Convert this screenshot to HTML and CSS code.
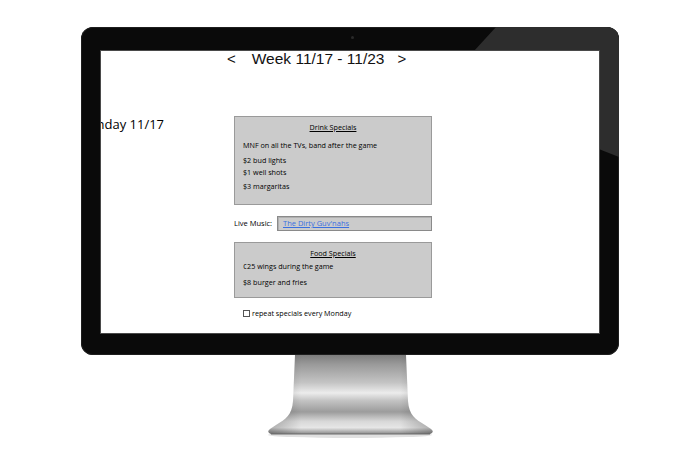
FILE: index.html
```html
<!DOCTYPE html>
<html>
<head>
<meta charset="utf-8">
<link rel="stylesheet" href="styles.css">
</head>
<body>
<div class="page">
  <div class="monitor">
    <div class="glare"></div>
    <div class="cam"></div>
    <div class="screen">
      <div class="week">
        <span class="arrow">&lt;</span>
        <span class="week-title">Week 11/17 - 11/23</span>
        <span class="arrow">&gt;</span>
      </div>
      <div class="body">
        <div class="day">Monday 11/17</div>
        <div class="main">
          <div class="box drink">
            <div class="box-title">Drink Specials</div>
            <div class="line l1">MNF on all the TVs, band after the game</div>
            <div class="line l2">$2 bud lights</div>
            <div class="line l3">$1 well shots</div>
            <div class="line l4">$3 margaritas</div>
          </div>
          <div class="music">
            <span class="music-label">Live Music:</span>
            <span class="music-input"><a class="link">The Dirty Guv'nahs</a></span>
          </div>
          <div class="box food">
            <div class="box-title">Food Specials</div>
            <div class="line f1">¢25 wings during the game</div>
            <div class="line f2">$8 burger and fries</div>
          </div>
          <div class="repeat">
            <span class="check"></span>
            <span class="repeat-text">repeat specials every Monday</span>
          </div>
        </div>
      </div>
    </div>
  </div>
  <svg class="stand" width="170" height="85" viewBox="0 0 170 85">
    <defs>
      <linearGradient id="sv" x1="0" y1="0" x2="0" y2="1">
        <stop offset="0" stop-color="#7d7d7d"/>
        <stop offset="0.12" stop-color="#9a9a9a"/>
        <stop offset="0.35" stop-color="#c4c4c4"/>
        <stop offset="0.48" stop-color="#ececec"/>
        <stop offset="0.58" stop-color="#c2c2c2"/>
        <stop offset="0.72" stop-color="#9c9c9c"/>
        <stop offset="0.84" stop-color="#d8d8d8"/>
        <stop offset="0.92" stop-color="#e6e6e6"/>
        <stop offset="1" stop-color="#8a8a8a"/>
      </linearGradient>
      <linearGradient id="sh" x1="0" y1="0" x2="1" y2="0">
        <stop offset="0" stop-color="#000" stop-opacity="0.25"/>
        <stop offset="0.2" stop-color="#000" stop-opacity="0"/>
        <stop offset="0.8" stop-color="#000" stop-opacity="0"/>
        <stop offset="1" stop-color="#000" stop-opacity="0.25"/>
      </linearGradient>
    </defs>
    <ellipse cx="85" cy="80" rx="82" ry="3" fill="#000" opacity="0.12"/>
    <path d="M30,0 L141,0 L143,46 C144,60 150,64 160,70 L166,74 Q170,77 165,79 L6,79 Q1,77 5,74 L11,70 C21,64 27,60 28,46 Z" fill="url(#sv)"/>
    <path d="M30,0 L141,0 L143,46 C144,60 150,64 160,70 L166,74 Q170,77 165,79 L6,79 Q1,77 5,74 L11,70 C21,64 27,60 28,46 Z" fill="url(#sh)"/>
    <path d="M6,79 L165,79" stroke="#6a6a6a" stroke-width="1"/>
  </svg>
</div>
</body>
</html>
```
FILE: styles.css
```css
html, body {
  margin: 0;
  padding: 0;
  background: #ffffff;
}

.page {
  width: 700px;
  height: 464px;
  padding-top: 27px;
  box-sizing: border-box;
  display: flex;
  flex-direction: column;
  align-items: center;
}

.monitor {
  position: relative;
  width: 538px;
  height: 328px;
  box-sizing: border-box;
  padding: 24px 20px 22px 20px;
  background: #0a0a0a;
  border-radius: 12px;
  box-shadow: inset 0 0 0 1px #1e1e1e;
}

.glare {
  position: absolute;
  left: 0;
  top: 0;
  width: 538px;
  height: 328px;
  border-radius: 12px;
  background: #2d2d2d;
  clip-path: polygon(415px 0, 538px 0, 538px 130px, 360px 60px);
}

.cam {
  position: absolute;
  left: 270px;
  top: 9px;
  width: 3px;
  height: 3px;
  border-radius: 50%;
  background: #2a2a2a;
}

.screen {
  position: relative;
  z-index: 1;
  width: 498px;
  height: 282px;
  background: #ffffff;
  overflow: hidden;
  outline: 1px solid #4a4a4a;
  font-family: "Open Sans", "DejaVu Sans", sans-serif;
  color: #111;
}

.week {
  display: flex;
  align-items: baseline;
  padding-left: 126px;
  margin-top: -1px;
  height: 17px;
  font-family: "Liberation Sans", Arial, sans-serif;
  font-size: 15.5px;
  line-height: 17px;
  color: #111;
}

.week .arrow {
  font-size: 15px;
}

.week-title {
  margin: 0 13px 0 16px;
}

.body {
  display: flex;
  margin-top: 49px;
}

.day {
  width: 157px;
  margin-left: -24px;
  flex-shrink: 0;
  font-size: 13px;
  line-height: 14px;
  margin-top: 1px;
  color: #000;
}

.main {
  width: 198px;
  display: flex;
  flex-direction: column;
}

.box {
  box-sizing: border-box;
  width: 198px;
  background: #cbcbcb;
  border: 1px solid #9a9a9a;
  font-size: 7.2px;
  color: #000;
}

.drink {
  height: 89px;
  padding: 5px 8px 0 8px;
}

.food {
  height: 56px;
  padding: 5px 8px 0 8px;
}

.box-title {
  text-align: center;
  text-decoration: underline;
  line-height: 10px;
}

.line {
  line-height: 10px;
}

.l1 { margin-top: 8px; }
.l2 { margin-top: 5px; }
.l3 { margin-top: 2px; }
.l4 { margin-top: 4px; }
.f1 { margin-top: 3px; }
.f2 { margin-top: 6px; }

.music {
  display: flex;
  align-items: center;
  height: 16px;
  margin: 10px 0 11px 0;
  font-size: 7.5px;
  color: #000;
}

.music-label {
  width: 43px;
  padding-left: 0;
}

.music-input {
  flex: 1;
  box-sizing: border-box;
  height: 15px;
  background: #cbcbcb;
  border: 1px solid #8a8a8a;
  box-shadow: inset 1px 1px 0 #b0b0b0;
  padding-left: 5px;
  display: flex;
  align-items: center;
}

.link {
  color: #3a6fe0;
  text-decoration: underline;
  font-size: 7.5px;
}

.repeat {
  display: flex;
  align-items: center;
  margin: 10px 0 0 9px;
  font-size: 7.2px;
  color: #000;
}

.check {
  width: 7px;
  height: 7px;
  box-sizing: border-box;
  border: 1px solid #555;
  background: #fff;
  margin-right: 2px;
}
```
